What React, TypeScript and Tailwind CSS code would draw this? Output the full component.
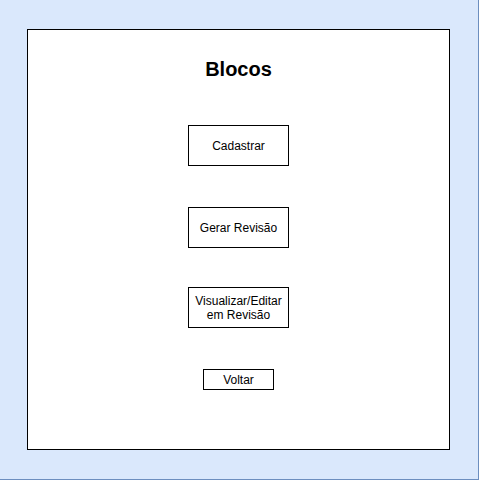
export default function App() {
  const btn =
    "flex items-center justify-center border border-black bg-white text-[12px] leading-[14px] text-black text-center";

  return (
    <div
      className="w-[479px] h-[480px] bg-[#dae8fc] border-r border-b border-[#6c8ebf] pl-[27px] pt-[29px]"
      style={{ fontFamily: '"Liberation Sans", Arial, sans-serif' }}
    >
      <div className="w-[423px] h-[421px] bg-white border border-black flex flex-col items-center">
        <h1 className="mt-[27px] text-[20px] leading-[24px] font-bold text-black">Blocos</h1>

        <div className={`${btn} mt-[44px] w-[101px] h-[41px]`}>Cadastrar</div>
        <div className={`${btn} mt-[41px] w-[101px] h-[41px]`}>Gerar Revisão</div>
        <div className={`${btn} mt-[39px] w-[101px] h-[41px]`}>
          Visualizar/Editar
          <br />
          em Revisão
        </div>
        <div className={`${btn} mt-[41px] w-[71px] h-[21px]`}>Voltar</div>
      </div>
    </div>
  );
}
